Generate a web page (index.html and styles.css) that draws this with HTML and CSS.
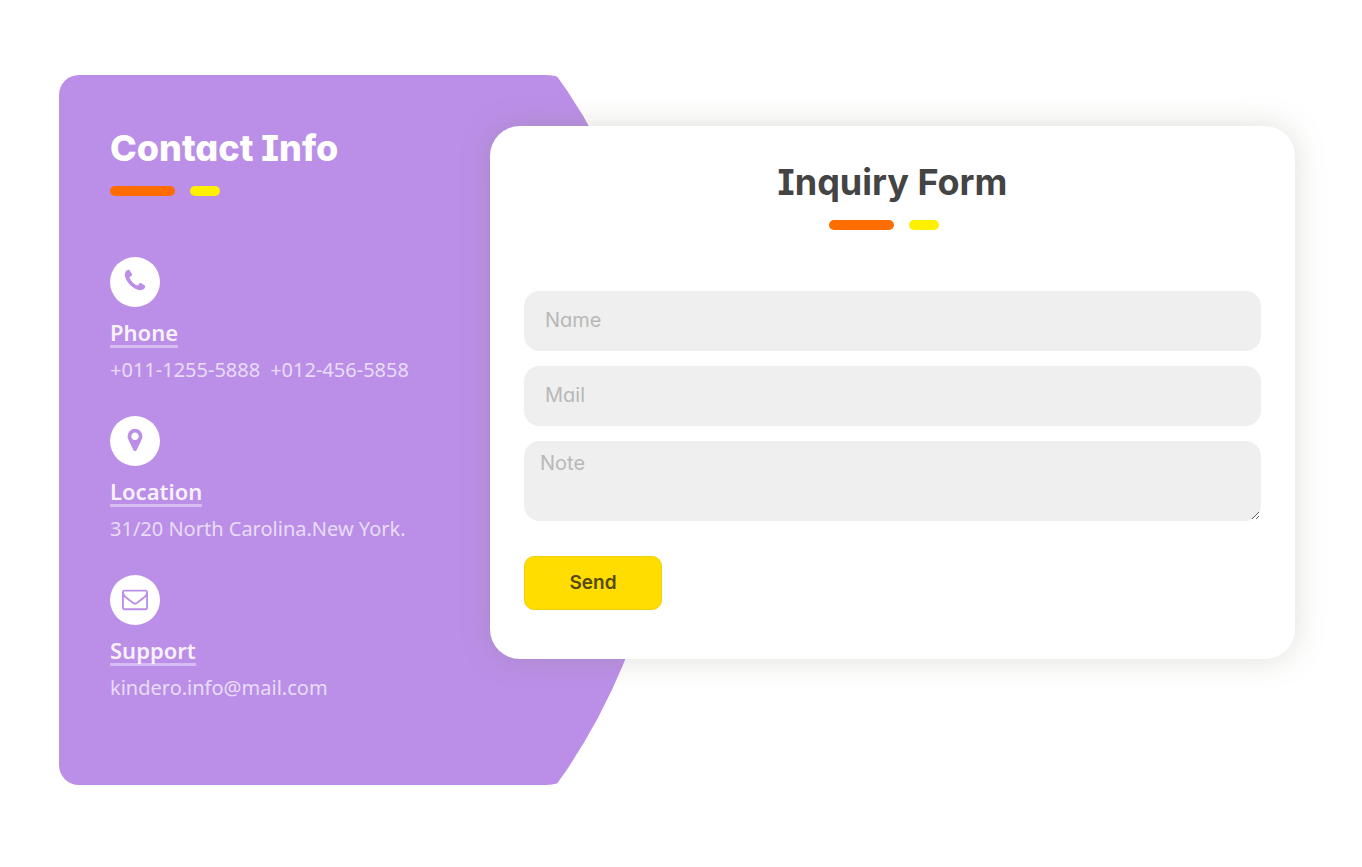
FILE: index.html
```html
<!DOCTYPE html>
<html lang="en">
<head>
<meta charset="utf-8">
<meta name="viewport" content="width=device-width, initial-scale=1">
<title>Contact</title>
<link rel="stylesheet" href="styles.css">
</head>
<body>
<main class="contact">
  <section class="info">
    <h2 class="title title-light">Contact Info</h2>
    <div class="bars"><span class="bar bar-long"></span><span class="bar bar-short"></span></div>
    <ul class="info-list">
      <li class="info-item">
        <span class="info-icon"><svg viewBox="0 0 1792 1792" aria-hidden="true"><path d="M1600 1240q0 27-10 70.500t-21 68.500q-21 50-122 106-94 51-186 51-27 0-53-3.500t-57.500-12.500-47-14.500-55.500-20.500-49-18q-98-35-175-83-127-79-264-216t-216-264q-48-77-83-175-3-9-18-49t-20.500-55.500-14.500-47-12.500-57.500-3.500-53q0-92 51-186 56-101 106-122 25-11 68.500-21t70.500-10q14 0 21 3 18 6 53 76 11 19 30 54t35 63.500 31 53.500q3 4 17.500 25t21.500 35.500 7 28.500q0 20-28.500 50t-62 55-62 53-28.500 46q0 9 5 22.500t8.500 20.500 14 24 11.500 19q76 137 174 235t235 174q2 1 19 11.500t24 14 20.500 8.500 22.500 5q18 0 46-28.500t53-62 55-62 50-28.500q14 0 28.500 7t35.500 21.500 25 17.500q25 15 53.500 31t63.500 35 54 30q70 35 76 53 3 7 3 21z"/></svg></span>
        <h3 class="info-label">Phone</h3>
        <p class="info-text"><span>+011-1255-5888</span><span>+012-456-5858</span></p>
      </li>
      <li class="info-item">
        <span class="info-icon"><svg viewBox="0 0 1792 1792" aria-hidden="true"><path d="M1152 640q0-106-75-181t-181-75-181 75-75 181 75 181 181 75 181-75 75-181zm256 0q0 109-33 179l-364 774q-16 33-47.500 52t-67.500 19-67.500-19-46.500-52l-365-774q-33-70-33-179 0-212 150-362t362-150 362 150 150 362z"/></svg></span>
        <h3 class="info-label">Location</h3>
        <p class="info-text">31/20 North Carolina.New York.</p>
      </li>
      <li class="info-item">
        <span class="info-icon"><svg viewBox="0 0 1792 1792" aria-hidden="true"><path d="M1664 1504v-768q-32 36-69 66-268 206-426 338-51 43-83 67t-86.500 48.500-102.500 24.500h-2q-48 0-102.500-24.500t-86.500-48.500-83-67q-158-132-426-338-37-30-69-66v768q0 13 9.500 22.500t22.500 9.500h1472q13 0 22.500-9.500t9.500-22.500zm0-1051v-24.500l-.5-13-3-12.500-5.500-9-9-7.500-14-2.500h-1472q-13 0-22.500 9.500t-9.500 22.500q0 168 147 284 193 152 401 317 6 5 35 29.500t46 37.500 44.500 31.500 50.500 27.500 43 9h2q20 0 43-9t50.500-27.500 44.500-31.500 46-37.500 35-29.500q208-165 401-317 54-43 100.500-115.500t46.500-131.500zm128-37v1088q0 66-47 113t-113 47h-1472q-66 0-113-47t-47-113v-1088q0-66 47-113t113-47h1472q66 0 113 47t47 113z"/></svg></span>
        <h3 class="info-label">Support</h3>
        <p class="info-text">kindero.info@mail.com</p>
      </li>
    </ul>
  </section>
  <section class="card">
    <h2 class="title title-dark">Inquiry Form</h2>
    <div class="bars bars-center"><span class="bar bar-long"></span><span class="bar bar-short"></span></div>
    <form class="form">
      <input class="field" type="text" name="name" placeholder="Name" aria-label="Name">
      <input class="field" type="email" name="mail" placeholder="Mail" aria-label="Mail">
      <textarea class="field field-note" name="note" placeholder="Note" aria-label="Note"></textarea>
      <button class="send" type="submit">Send</button>
    </form>
  </section>
</main>
</body>
</html>
```
FILE: styles.css
```css
* {
  box-sizing: border-box;
}

body {
  margin: 0;
  background: #fff;
  font-family: "Noto Sans", sans-serif;
}

h2, h3, p, ul {
  margin: 0;
  padding: 0;
}

.contact {
  display: grid;
  grid-template-columns: 431fr 180fr 625fr;
  padding: 75px 67px 75px 59px;
}

/* Purple panel with a bowed right edge */
.info {
  grid-column: 1 / 3;
  grid-row: 1;
  padding: 51px 51px 82px;
  background: #bb8fe8;
  border-radius: 20px 124px 124px 20px / 20px 50% 50% 20px;
  clip-path: circle(farthest-side at 0 50%);
}

.card {
  grid-column: 2 / 4;
  grid-row: 1;
  align-self: start;
  z-index: 1;
  margin-top: 51px;
  padding: 34px 34px 49px;
  background: #fff;
  border-radius: 30px;
  box-shadow: 0 0 30px rgba(125, 125, 100, 0.25);
}

.title {
  font-family: Inter, sans-serif;
  font-feature-settings: "cv11", "cv08";
  font-size: 36px;
  font-weight: 700;
  line-height: 44px;
}

.title-light {
  font-weight: 800;
  color: #fff;
}

.title-dark {
  color: #444;
  text-align: center;
}

.bars {
  display: flex;
  gap: 15px;
  margin-top: 16px;
}

.bars-center {
  justify-content: center;
  padding-right: 18px;
}

.bar {
  height: 10px;
  border-radius: 5px;
}

.bar-long {
  width: 65px;
  background: #ff6c00;
}

.bar-short {
  width: 30px;
  background: #ffef00;
}

.info-list {
  display: grid;
  gap: 31px;
  margin-top: 61px;
  list-style: none;
}

.info-item {
  display: flex;
  flex-direction: column;
  align-items: flex-start;
}

.info-icon {
  width: 50px;
  height: 50px;
  padding: 11px 12px;
  border-radius: 50%;
  background: #fff;
}

.info-icon svg {
  display: block;
  width: 26px;
  height: 26px;
  fill: #bb8fe8;
}

.info-label {
  margin-top: 14px;
  padding-bottom: 2px;
  border-bottom: 3px solid rgba(255, 255, 255, 0.4);
  font-size: 22px;
  font-weight: 600;
  line-height: 22px;
  color: rgba(255, 255, 255, 0.9);
}

.info-text {
  display: flex;
  gap: 10px;
  margin-top: 7px;
  font-size: 20px;
  line-height: 30px;
  color: rgba(255, 255, 255, 0.7);
}

.form {
  display: flex;
  flex-direction: column;
  gap: 15px;
  margin-top: 61px;
}

.field {
  width: 100%;
  height: 60px;
  padding: 0 20px 2px;
  border: 1px solid #efefef;
  border-radius: 15px;
  background: #efefef;
  font-family: Inter, sans-serif;
  font-feature-settings: "cv11";
  font-size: 20px;
  color: #444;
}

.field::placeholder {
  color: #b8b8b8;
}

.field-note {
  height: 80px;
  padding: 9px 15px;
  resize: vertical;
}

.send {
  align-self: flex-start;
  width: 138px;
  height: 54px;
  margin-top: 20px;
  padding: 0 0 2px;
  border: 1px solid #f2cf0c;
  border-radius: 10px;
  background: #ffdd00;
  font-family: Inter, sans-serif;
  font-feature-settings: "cv11";
  font-size: 19px;
  font-weight: 600;
  color: #554a11;
}
```
